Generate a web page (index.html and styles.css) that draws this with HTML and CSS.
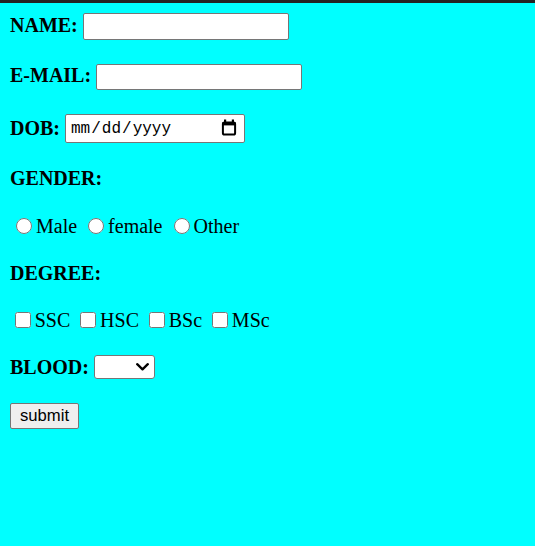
FILE: index.html
```html
<!DOCTYPE html>
<html>
<head>
<meta charset="utf-8">
<title>Form</title>
<link rel="stylesheet" href="styles.css">
</head>
<body>
<div class="topbar"></div>
<form class="form">
  <div class="row row-a">
    <label class="lbl" for="name">NAME:</label>
    <input class="text" type="text" id="name">
  </div>
  <div class="row row-b">
    <label class="lbl" for="email">E-MAIL:</label>
    <input class="text" type="email" id="email">
  </div>
  <div class="row row-c">
    <label class="lbl" for="dob">DOB:</label>
    <span class="date-wrap">
      <input class="date" type="date" id="dob">
      <svg class="cal" width="16" height="17" viewBox="0 0 16 17" aria-hidden="true">
        <rect x="3" y="0.5" width="2.2" height="3" fill="#000"/>
        <rect x="10.8" y="0.5" width="2.2" height="3" fill="#000"/>
        <rect x="1.9" y="3.4" width="12.2" height="12.2" rx="1.6" fill="none" stroke="#000" stroke-width="2"/>
        <rect x="1.5" y="3" width="13" height="3.4" fill="#000"/>
      </svg>
    </span>
  </div>
  <div class="row row-t">
    <span class="lbl">GENDER:</span>
  </div>
  <div class="row row-opts row-e">
    <label class="opt"><input class="radio" type="radio" name="g"><span>Male</span></label>
    <label class="opt"><input class="radio" type="radio" name="g"><span>female</span></label>
    <label class="opt"><input class="radio" type="radio" name="g"><span>Other</span></label>
  </div>
  <div class="row row-t">
    <span class="lbl">DEGREE:</span>
  </div>
  <div class="row row-opts row-g">
    <label class="opt"><input class="check" type="checkbox"><span>SSC</span></label>
    <label class="opt"><input class="check" type="checkbox"><span>HSC</span></label>
    <label class="opt"><input class="check" type="checkbox"><span>BSc</span></label>
    <label class="opt"><input class="check" type="checkbox"><span>MSc</span></label>
  </div>
  <div class="row row-h">
    <label class="lbl" for="blood">BLOOD:</label>
    <span class="sel-wrap">
      <select class="sel" id="blood">
        <option></option>
        <option>A+</option>
        <option>B+</option>
        <option>O+</option>
        <option>AB+</option>
      </select>
      <svg class="chev" width="13" height="8" viewBox="0 0 13 8" aria-hidden="true">
        <path d="M1.2 1.2 L6.5 6.3 L11.8 1.2" fill="none" stroke="#000" stroke-width="2.3" stroke-linecap="round" stroke-linejoin="round"/>
      </svg>
    </span>
  </div>
  <div class="row row-i">
    <input class="btn" type="submit" value="submit">
  </div>
</form>
</body>
</html>
```
FILE: styles.css
```css
html, body {
  margin: 0;
  padding: 0;
}
body {
  background: #00ffff;
  min-height: 546px;
  font-family: "Liberation Serif", "Times New Roman", serif;
  font-size: 20px;
  color: #000;
}
.topbar {
  height: 3px;
  background: #232323;
}
.form {
  display: flex;
  flex-direction: column;
  gap: 24px;
  padding: 10px 10px 0 10px;
}
.row {
  display: flex;
  align-items: center;
  gap: 5px;
}
.row-a { height: 27px; align-items: baseline; }
.row-b { height: 26px; align-items: baseline; }
.row-c { height: 29px; }
.row-t { height: 23px; }
.row-e { height: 24px; }
.row-g { height: 22px; }
.row-h { height: 24px; }
.row-i { height: 26px; }
.lbl {
  font-weight: bold;
  line-height: 23px;
}
.text {
  box-sizing: border-box;
  width: 206px;
  height: 27px;
  margin: 0;
  padding: 1px 3px;
  border: 1px solid #767676;
  border-radius: 2px;
  background: #fff;
  font-family: "Liberation Sans", Arial, sans-serif;
  font-size: 16.67px;
}
.row-b .text { height: 26px; }
.date-wrap {
  position: relative;
  display: flex;
}
.date {
  box-sizing: border-box;
  width: 180px;
  height: 29px;
  margin: 0;
  padding: 0 6px 0 4px;
  border: 1px solid #767676;
  border-radius: 2px;
  background: #fff;
  font-family: "Liberation Mono", "DejaVu Sans Mono", monospace;
  font-size: 16px;
  color: #000;
}
.date::-webkit-calendar-picker-indicator {
  width: 16px;
  height: 16px;
  padding: 0;
  margin: 0;
  opacity: 0;
}
.cal {
  position: absolute;
  left: 156px;
  top: 5px;
  pointer-events: none;
}
.row-opts {
  gap: 5px;
}
.opt {
  display: flex;
  align-items: center;
  line-height: 23px;
}
.radio {
  width: 16px;
  height: 16px;
  margin: 0 3.75px 0 6.25px;
}
.check {
  width: 16px;
  height: 16px;
  margin: 0 3.75px 0 5px;
}
.sel-wrap {
  position: relative;
  display: flex;
}
.sel {
  box-sizing: border-box;
  width: 61px;
  height: 24px;
  margin: 0;
  border: 1px solid #767676;
  border-radius: 3px;
  background: #fff;
  font-family: "Liberation Sans", Arial, sans-serif;
  font-size: 16.67px;
  appearance: none;
  -webkit-appearance: none;
}
.chev {
  position: absolute;
  left: 42px;
  top: 8px;
  pointer-events: none;
}
.btn {
  box-sizing: border-box;
  width: 69px;
  height: 26px;
  margin: 0;
  padding: 0;
  border: 1px solid #767676;
  border-radius: 2px;
  background: #efefef;
  font-family: "Liberation Sans", Arial, sans-serif;
  font-size: 16.67px;
  color: #000;
}
```
